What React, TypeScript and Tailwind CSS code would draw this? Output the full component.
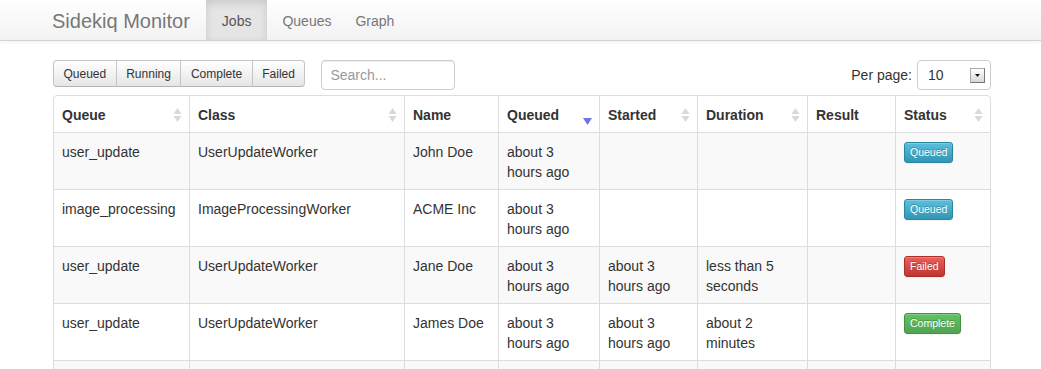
import React from "react";

type Job = {
  queue: string;
  klass: string;
  name: string;
  queued: string;
  started: string;
  duration: string;
  result: string;
  status: "Queued" | "Failed" | "Complete" | "";
};

const jobs: Job[] = [
  { queue: "user_update", klass: "UserUpdateWorker", name: "John Doe", queued: "about 3 hours ago", started: "", duration: "", result: "", status: "Queued" },
  { queue: "image_processing", klass: "ImageProcessingWorker", name: "ACME Inc", queued: "about 3 hours ago", started: "", duration: "", result: "", status: "Queued" },
  { queue: "user_update", klass: "UserUpdateWorker", name: "Jane Doe", queued: "about 3 hours ago", started: "about 3 hours ago", duration: "less than 5 seconds", result: "", status: "Failed" },
  { queue: "user_update", klass: "UserUpdateWorker", name: "James Doe", queued: "about 3 hours ago", started: "about 3 hours ago", duration: "about 2 minutes", result: "", status: "Complete" },
  // next row only peeks in at the bottom edge
  { queue: "", klass: "", name: "", queued: "", started: "", duration: "", result: "", status: "" },
];

const cols = "grid grid-cols-[135px_215px_94px_101px_98px_110px_88px_95px]";

const SortBoth = () => (
  <svg width="9" height="16" viewBox="0 0 9 16" className="shrink-0">
    <polygon points="4.5,1 8.5,7 0.5,7" fill="#d9d9d9" />
    <polygon points="0.5,9 8.5,9 4.5,15" fill="#d9d9d9" />
  </svg>
);

const SortDesc = () => (
  <svg width="9" height="16" viewBox="0 0 9 16" className="shrink-0 overflow-visible">
    <polygon points="0,11 9,11 4.5,18" fill="#7174e6" />
  </svg>
);

const statusStyle = {
  Queued: "bg-gradient-to-b from-[#5bc0de] to-[#2f96b4] border-[#2a85a0]",
  Failed: "bg-gradient-to-b from-[#ee5f5b] to-[#bd362f] border-[#a9302a]",
  Complete: "bg-gradient-to-b from-[#62c462] to-[#51a351] border-[#449144]",
};

const headers: { label: string; sort: "both" | "desc" | "none" }[] = [
  { label: "Queue", sort: "both" },
  { label: "Class", sort: "both" },
  { label: "Name", sort: "none" },
  { label: "Queued", sort: "desc" },
  { label: "Started", sort: "both" },
  { label: "Duration", sort: "both" },
  { label: "Result", sort: "none" },
  { label: "Status", sort: "both" },
];

export default function App() {
  return (
    <div className="h-[369px] overflow-hidden bg-white text-[#333] font-['Liberation_Sans',Helvetica,Arial,sans-serif] text-[14px] leading-[20px]">
      {/* navbar */}
      <div className="h-[41px] flex items-stretch bg-gradient-to-b from-white to-[#f2f2f2] border-b border-[#d4d4d4] shadow-[0_1px_4px_rgba(0,0,0,0.065)] pl-[52px]">
        <div className="flex items-center pt-[2px] pr-[16px] text-[20px] text-[#777]">Sidekiq Monitor</div>
        <div className="flex items-center pt-[2px] px-[16px] bg-[#e5e5e5] shadow-[inset_0_3px_8px_rgba(0,0,0,0.125)] text-[#555]">Jobs</div>
        <div className="flex items-center pt-[2px] pl-[15px] pr-[14px] text-[#777]">Queues</div>
        <div className="flex items-center pt-[2px] px-[10px] text-[#777]">Graph</div>
      </div>

      <div className="ml-[53px] w-[938px]">
        {/* toolbar */}
        <div className="mt-[19px] flex items-start h-[30px]">
          <div className="flex text-[12px] leading-[20px]">
            {["Queued", "Running", "Complete", "Failed"].map((b, i) => (
              <div
                key={b}
                className={`h-[27px] flex items-center px-[9.5px] border border-[#c5c5c5] border-b-[#b3b3b3] bg-gradient-to-b from-white to-[#e6e6e6] shadow-[inset_0_1px_0_rgba(255,255,255,0.2)] ${
                  i === 0 ? "rounded-l-[4px]" : "-ml-px"
                } ${i === 3 ? "rounded-r-[4px]" : ""}`}
              >
                {b}
              </div>
            ))}
          </div>
          <div className="ml-[16px] w-[134px] h-[30px] border border-[#ccc] rounded-[4px] shadow-[inset_0_1px_1px_rgba(0,0,0,0.075)] flex items-center px-[8px] text-[#999]">
            Search...
          </div>
          <div className="ml-auto flex items-center h-[30px]">
            <span className="mr-[5px] text-[#333]">Per page:</span>
            <div className="w-[74px] h-[30px] border border-[#ccc] rounded-[4px] flex items-center pl-[10px] pr-[5px] text-[#333]">
              <span className="flex-1">10</span>
              <div className="w-[15px] h-[15px] border border-[#aaa] border-b-[#777] border-r-[#777] bg-gradient-to-b from-white to-[#d8d8d8] flex items-center justify-center">
                <svg width="5" height="3" viewBox="0 0 5 3">
                  <polygon points="0,0 5,0 2.5,3" fill="#111" />
                </svg>
              </div>
            </div>
          </div>
        </div>

        {/* table */}
        <div className="mt-[5px] border border-[#ddd] rounded-[4px] overflow-hidden">
          <div className={cols}>
            {headers.map((h, i) => (
              <div
                key={h.label}
                className={`h-[36px] flex justify-between items-center pt-[2px] pl-[8px] pr-[7px] font-bold ${i > 0 ? "border-l border-[#ddd]" : ""}`}
              >
                <span>{h.label}</span>
                {h.sort === "both" && <SortBoth />}
                {h.sort === "desc" && <SortDesc />}
              </div>
            ))}
          </div>
          {jobs.map((j, r) => (
            <div key={r} className={`${cols} border-t border-[#ddd] ${r % 2 === 0 ? "bg-[#f9f9f9]" : "bg-white"}`}>
              {[j.queue, j.klass, j.name, j.queued, j.started, j.duration, j.result].map((v, i) => (
                <div key={i} className={`px-[8px] pt-[9px] pb-[7px] min-h-[56px] ${i > 0 ? "border-l border-[#ddd]" : ""}`}>
                  {v}
                </div>
              ))}
              <div className="p-[8px] border-l border-[#ddd]">
                {j.status && (
                  <span
                    className={`mt-[1px] inline-block px-[5px] h-[21px] leading-[19px] text-[10.5px] text-white rounded-[3px] border [text-shadow:0_-1px_0_rgba(0,0,0,0.25)] shadow-[inset_0_1px_0_rgba(255,255,255,0.2),0_1px_2px_rgba(0,0,0,0.05)] ${statusStyle[j.status]}`}
                  >
                    {j.status}
                  </span>
                )}
              </div>
            </div>
          ))}
        </div>
      </div>
    </div>
  );
}
